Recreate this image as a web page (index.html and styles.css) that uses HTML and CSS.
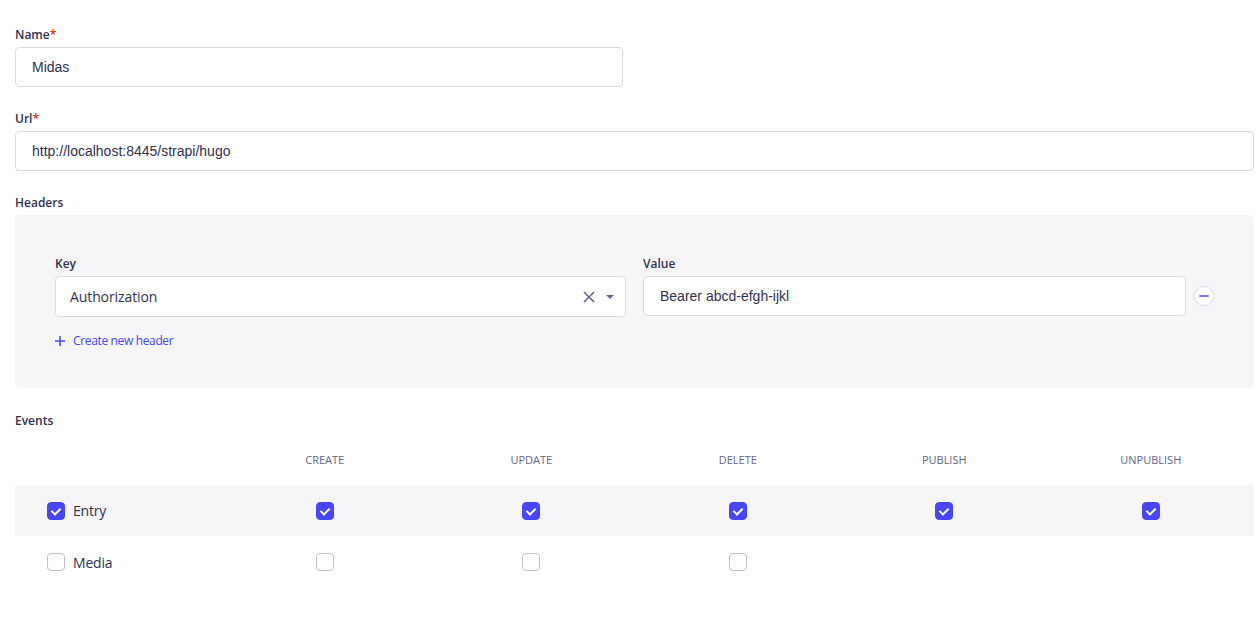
FILE: index.html
```html
<!DOCTYPE html>
<html lang="en">
<head>
<meta charset="utf-8">
<title>Webhook</title>
<link rel="stylesheet" href="styles.css">
</head>
<body>
<form class="form">
  <div class="grid2">
    <div class="field">
      <label class="label">Name<span class="req">*</span></label>
      <div class="input"><span class="value">Midas</span></div>
    </div>
  </div>

  <div class="field">
    <label class="label">Url<span class="req">*</span></label>
    <div class="input"><span class="value">http://localhost:8445/strapi/hugo</span></div>
  </div>

  <div class="field">
    <label class="label">Headers</label>
    <div class="headers-box">
      <div class="header-row">
        <div class="hcol">
          <label class="label">Key</label>
          <div class="input select">
            <span class="select-text">Authorization</span>
            <span class="select-icons">
              <svg class="clear" width="12" height="12" viewBox="0 0 12 12"><path d="M1 1L11 11M11 1L1 11" stroke="#666687" stroke-width="1.6" fill="none"/></svg>
              <svg class="caret" width="8" height="4" viewBox="0 0 8 4"><path d="M0 0H8L4 4Z" fill="#666687"/></svg>
            </span>
          </div>
        </div>
        <div class="hcol">
          <label class="label">Value</label>
          <div class="value-line">
            <div class="input grow"><span class="value">Bearer abcd-efgh-ijkl</span></div>
            <button type="button" class="remove"><svg width="10" height="2" viewBox="0 0 10 2"><rect width="10" height="2" rx="1" fill="#7b79ff"/></svg></button>
          </div>
        </div>
      </div>
      <div class="add">
        <svg width="10" height="10" viewBox="0 0 10 10"><path d="M5 0V10M0 5H10" stroke="#4945ff" stroke-width="1.6"/></svg>
        <span>Create new header</span>
      </div>
    </div>
  </div>

  <div class="field events">
    <label class="label">Events</label>
    <div class="table">
      <div class="trow thead">
        <div class="cell"></div>
        <div class="cell th">CREATE</div>
        <div class="cell th">UPDATE</div>
        <div class="cell th">DELETE</div>
        <div class="cell th">PUBLISH</div>
        <div class="cell th">UNPUBLISH</div>
      </div>
      <div class="trow shaded">
        <div class="cell first"><span class="cb on"></span><span class="rowname">Entry</span></div>
        <div class="cell"><span class="cb on"></span></div>
        <div class="cell"><span class="cb on"></span></div>
        <div class="cell"><span class="cb on"></span></div>
        <div class="cell"><span class="cb on"></span></div>
        <div class="cell"><span class="cb on"></span></div>
      </div>
      <div class="trow">
        <div class="cell first"><span class="cb"></span><span class="rowname">Media</span></div>
        <div class="cell"><span class="cb"></span></div>
        <div class="cell"><span class="cb"></span></div>
        <div class="cell"><span class="cb"></span></div>
        <div class="cell"></div>
        <div class="cell"></div>
      </div>
    </div>
  </div>
</form>
</body>
</html>
```
FILE: styles.css
```css
* { box-sizing: border-box; }
html, body { margin: 0; padding: 0; background: #ffffff; }
body {
  font-family: "Open Sans", "Noto Sans", sans-serif;
  color: #32324d;
}
.form {
  width: 1239px;
  margin-left: 15px;
  padding-top: 27px;
  display: flex;
  flex-direction: column;
  gap: 24px;
}
.grid2 {
  display: grid;
  grid-template-columns: 608px 1fr;
}
.field { display: flex; flex-direction: column; }
.label {
  font-size: 12px;
  line-height: 16px;
  font-weight: 600;
  color: #32324d;
  margin-bottom: 4px;
}
.req { color: #d02b20; }
.input {
  height: 40px;
  border: 1px solid #dcdce4;
  border-radius: 4px;
  background: #fff;
  display: flex;
  align-items: center;
  padding: 0 16px;
}
.value {
  font-family: "Liberation Sans", Arial, sans-serif;
  font-size: 14px;
  color: #32324d;
}
.headers-box {
  background: #f6f6f9;
  border-radius: 4px;
  padding: 41px 40px 39px 40px;
}
.header-row {
  display: grid;
  grid-template-columns: 571px 1fr;
  gap: 17px;
}
.hcol { display: flex; flex-direction: column; }
.select { height: 41px; padding: 0 11px 0 14px; justify-content: space-between; }
.select-text { font-size: 14px; color: #32324d; letter-spacing: -0.1px; }
.select-icons { display: flex; align-items: center; gap: 11px; }
.value-line { display: flex; align-items: center; gap: 8px; }
.grow { flex: 1; }
.remove {
  width: 20px;
  height: 20px;
  border-radius: 50%;
  border: 1px solid #dcdce4;
  background: #fff;
  padding: 0;
  display: flex;
  align-items: center;
  justify-content: center;
}
.add {
  margin-top: 16px;
  display: flex;
  align-items: center;
  gap: 8px;
  font-size: 12px;
  line-height: 16px;
  color: #4945ff;
  letter-spacing: -0.35px;
}
.events { margin-top: 1px; }
.events .label { margin-bottom: 5px; }
.table { display: flex; flex-direction: column; }
.trow {
  display: grid;
  grid-template-columns: repeat(6, 1fr);
  height: 51px;
  align-items: center;
}
.trow + .trow:not(.shaded) { height: 52px; }
.shaded { background: #f6f6f9; }
.cell { display: flex; justify-content: center; align-items: center; }
.th {
  font-size: 11px;
  font-weight: 400;
  color: #666687;
}
.first { justify-content: flex-start; padding-left: 32px; gap: 8px; }
.rowname { font-size: 14px; color: #32324d; letter-spacing: -0.2px; }
.cb {
  width: 18px;
  height: 18px;
  border-radius: 4px;
  border: 1px solid #c0c0cf;
  background: #fff;
  display: inline-block;
  position: relative;
}
.cb.on {
  background: #4945ff;
  border-color: #4945ff;
}
.cb.on::after {
  content: "";
  position: absolute;
  left: 5px;
  top: 3px;
  width: 4px;
  height: 7px;
  border: solid #fff;
  border-width: 0 2px 2px 0;
  transform: rotate(45deg);
}
```
